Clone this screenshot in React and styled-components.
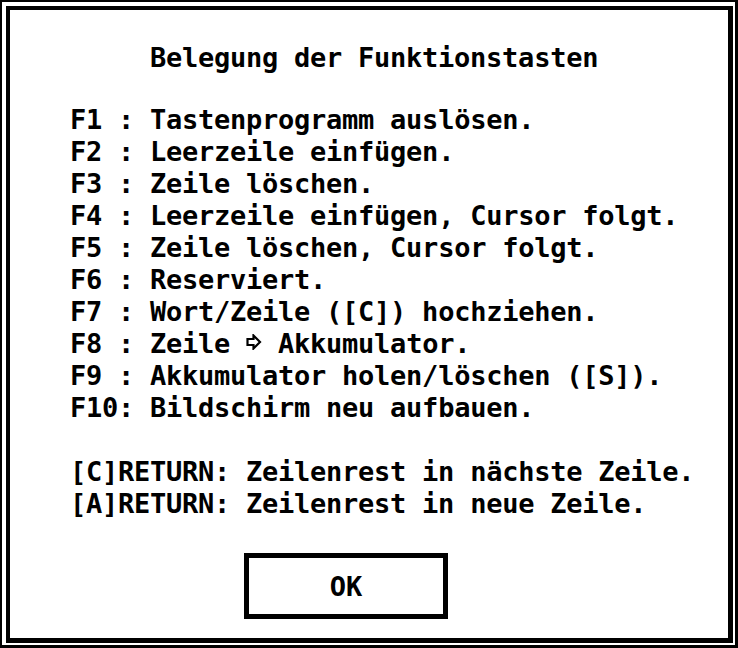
import React from 'react';
import styled, { createGlobalStyle } from 'styled-components';

const keys = [
  ['F1 : ', 'Tastenprogramm auslösen.'],
  ['F2 : ', 'Leerzeile einfügen.'],
  ['F3 : ', 'Zeile löschen.'],
  ['F4 : ', 'Leerzeile einfügen, Cursor folgt.'],
  ['F5 : ', 'Zeile löschen, Cursor folgt.'],
  ['F6 : ', 'Reserviert.'],
  ['F7 : ', 'Wort/Zeile ([C]) hochziehen.'],
  ['F8 : ', 'arrow'],
  ['F9 : ', 'Akkumulator holen/löschen ([S]).'],
  ['F10: ', 'Bildschirm neu aufbauen.'],
];

const returns = [
  '[C]RETURN: Zeilenrest in nächste Zeile.',
  '[A]RETURN: Zeilenrest in neue Zeile.',
];

const Arrow = () => (
  <ArrowIcon viewBox="0 0 16 16" width="16" height="16">
    <polygon
      points="1.5,5 7.5,5 7.5,1.5 14,8 7.5,14.5 7.5,11 1.5,11"
      fill="none"
      stroke="#000"
      strokeWidth="2.2"
    />
  </ArrowIcon>
);

const App = () => {
  return (
    <>
      <GlobalStyle />
      <Frame>
        <Panel>
          <Title indent={5}>Belegung der Funktionstasten</Title>
          <Block>
            {keys.map(([k, text]) => (
              <Line key={k}>
                {k}
                {text === 'arrow' ? (
                  <>
                    Zeile <Arrow /> Akkumulator.
                  </>
                ) : (
                  text
                )}
              </Line>
            ))}
          </Block>
          <Block>
            {returns.map((r) => (
              <Line key={r}>{r}</Line>
            ))}
          </Block>
          <Button>OK</Button>
        </Panel>
      </Frame>
    </>
  );
};

const GlobalStyle = createGlobalStyle`
  html, body {
    margin: 0;
    padding: 0;
    background: #fff;
  }
  * {
    box-sizing: border-box;
  }
`;

const Frame = styled.div`
  width: 738px;
  height: 648px;
  background: #fff;
  border: solid #000;
  border-width: 2px 3px 3px 2px;
  padding: 4px 2px 2px 4px;
`;

const Panel = styled.div`
  height: 100%;
  border: solid #000;
  border-width: 4px 5px 5px 4px;
  padding: 32px 0 0 60px;
  display: flex;
  flex-direction: column;
  font-family: 'DejaVu Sans Mono', 'Liberation Mono', monospace;
  font-weight: bold;
  font-size: 27px;
  letter-spacing: -0.25px;
  color: #000;
`;

const Line = styled.div`
  height: 32px;
  line-height: 32px;
  white-space: pre;
`;

const Title = styled(Line)`
  padding-left: ${(p) => p.indent * 16}px;
  margin-bottom: 30px;
`;

const Block = styled.div`
  display: flex;
  flex-direction: column;
  & + & {
    margin-top: 32px;
  }
`;

const ArrowIcon = styled.svg`
  display: inline-block;
  width: 16px;
  height: 16px;
  vertical-align: 3px;
`;

const Button = styled.div`
  margin: 33px 0 0 174px;
  width: 204px;
  height: 66px;
  border: 5px solid #000;
  display: flex;
  align-items: center;
  justify-content: center;
  letter-spacing: 0;
`;

export default App;
